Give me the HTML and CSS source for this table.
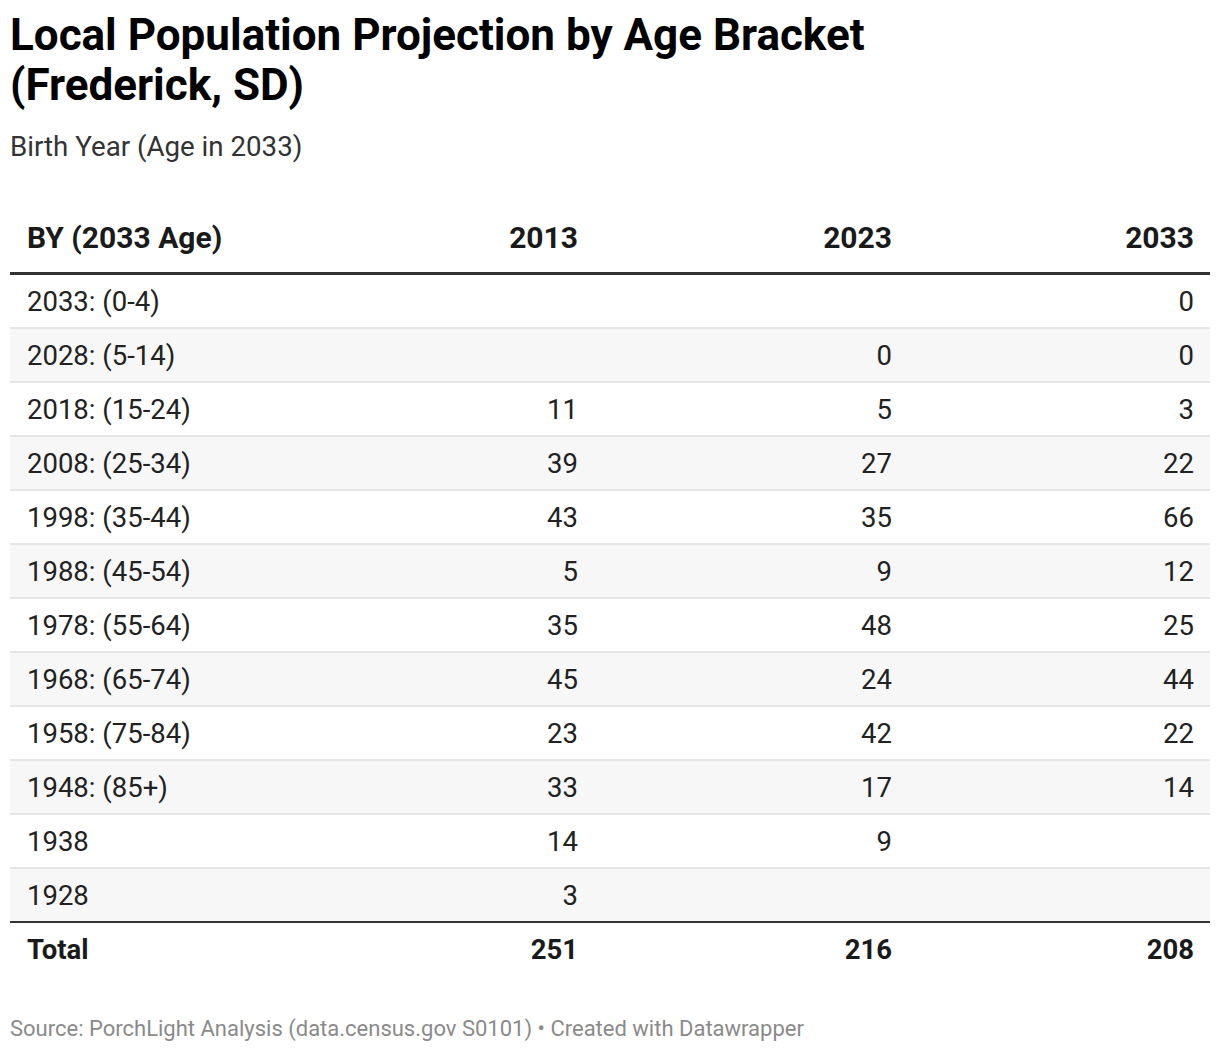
FILE: index.html
```html
<!DOCTYPE html>
<html>
<head>
<meta charset="utf-8">
<link rel="stylesheet" href="styles.css">
</head>
<body>
<div class="chart">
  <h1 class="title">Local Population Projection by Age Bracket<br>(Frederick, SD)</h1>
  <p class="subtitle">Birth Year (Age in 2033)</p>
  <table class="data">
    <colgroup>
      <col class="c1"><col class="c2"><col class="c3"><col class="c4">
    </colgroup>
    <thead>
      <tr><th class="lbl">BY (2033 Age)</th><th>2013</th><th>2023</th><th>2033</th></tr>
    </thead>
    <tbody>
      <tr><td class="lbl">2033: (0-4)</td><td></td><td></td><td>0</td></tr>
      <tr><td class="lbl">2028: (5-14)</td><td></td><td>0</td><td>0</td></tr>
      <tr><td class="lbl">2018: (15-24)</td><td>11</td><td>5</td><td>3</td></tr>
      <tr><td class="lbl">2008: (25-34)</td><td>39</td><td>27</td><td>22</td></tr>
      <tr><td class="lbl">1998: (35-44)</td><td>43</td><td>35</td><td>66</td></tr>
      <tr><td class="lbl">1988: (45-54)</td><td>5</td><td>9</td><td>12</td></tr>
      <tr><td class="lbl">1978: (55-64)</td><td>35</td><td>48</td><td>25</td></tr>
      <tr><td class="lbl">1968: (65-74)</td><td>45</td><td>24</td><td>44</td></tr>
      <tr><td class="lbl">1958: (75-84)</td><td>23</td><td>42</td><td>22</td></tr>
      <tr><td class="lbl">1948: (85+)</td><td>33</td><td>17</td><td>14</td></tr>
      <tr><td class="lbl">1938</td><td>14</td><td>9</td><td></td></tr>
      <tr class="last"><td class="lbl">1928</td><td>3</td><td></td><td></td></tr>
    </tbody>
    <tfoot>
      <tr><td class="lbl">Total</td><td>251</td><td>216</td><td>208</td></tr>
    </tfoot>
  </table>
  <p class="footer">Source: PorchLight Analysis (data.census.gov S0101) • Created with Datawrapper</p>
</div>
</body>
</html>
```

FILE: styles.css
```css
html, body {
  margin: 0;
  padding: 0;
  background: #ffffff;
}
body {
  font-family: Roboto, "Liberation Sans", sans-serif;
  color: #222222;
}
.chart {
  padding: 10px;
}
.title {
  margin: 0;
  font-size: 44px;
  line-height: 50px;
  font-weight: 700;
  color: #000000;
}
.subtitle {
  margin: 22px 0 0 0;
  font-size: 27.7px;
  line-height: 30px;
  color: #333333;
}
.data {
  margin-top: 30px;
  width: 1200px;
  border-collapse: collapse;
  table-layout: fixed;
  font-size: 27.5px;
  line-height: 30px;
}
.c1 { width: 270px; }
.c2 { width: 314px; }
.c3 { width: 314px; }
.c4 { width: 302px; }
.data th, .data td {
  text-align: right;
  padding: 12px 16px 10px 16px;
  white-space: nowrap;
}
.data th.lbl, .data td.lbl {
  text-align: left;
  padding-left: 17px;
}
.data thead th {
  font-size: 30px;
  font-weight: 700;
  color: #1a1a1a;
  padding-top: 31px;
  padding-bottom: 19px;
  border-bottom: 3px solid #333333;
}
.data tbody tr {
  border-bottom: 2px solid #e6e6e6;
}
.data tbody tr:nth-child(even) {
  background: #f7f7f7;
}
.data tbody tr.last {
  border-bottom: 2px solid #333333;
}
.data tfoot td {
  font-weight: 700;
  color: #1a1a1a;
}
.footer {
  margin: 42px 0 0 0;
  font-size: 22px;
  line-height: 24px;
  color: #8a8a8a;
}
```
